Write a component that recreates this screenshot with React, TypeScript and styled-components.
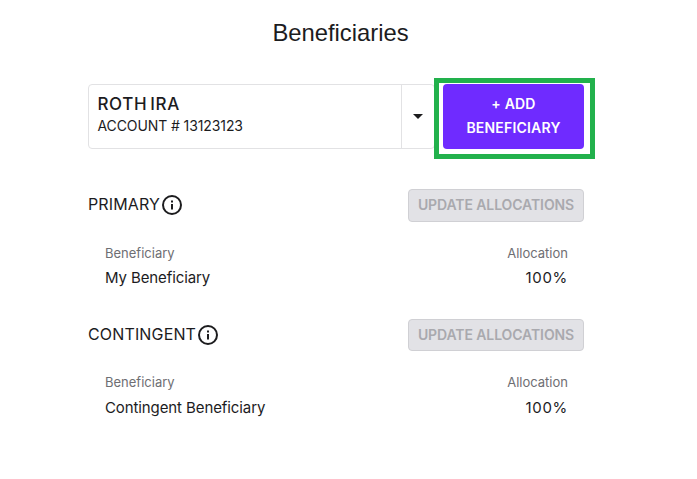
import React from "react";
import styled, { createGlobalStyle } from "styled-components";

const GlobalStyle = createGlobalStyle`
    html, body {
        margin: 0;
        background: #fff;
        font-family: Inter, "Liberation Sans", sans-serif;
        color: #1c1c1e;
    }
`;

const Page = styled.main`
    width: 697px;
    height: 479px;
    overflow: hidden;
    padding: 0 113px 0 88px;
    box-sizing: border-box;
    display: flex;
    flex-direction: column;
`;

const Title = styled.h1`
    margin: 17px 0 36px;
    padding-left: 9px;
    height: 31px;
    line-height: 31px;
    font-size: 23.8px;
    font-weight: 400;
    text-align: center;
    font-family: "Liberation Sans", sans-serif;
`;

const TopRow = styled.div`
    display: flex;
    height: 65px;
    gap: 8px;
    margin-bottom: 40px;
`;

const AccountSelect = styled.div`
    flex: 1;
    display: flex;
    border: 1px solid #e2e2e4;
    border-radius: 4px;
    box-sizing: border-box;
`;

const AccountText = styled.div`
    flex: 1;
    padding: 8px 9px 0 8.5px;
`;

const AccountName = styled.div`
    font-size: 17px;
    line-height: 22px;
    font-weight: 500;
    letter-spacing: 0.6px;
    word-spacing: -2px;
`;

const AccountNumber = styled.div`
    font-size: 14px;
    line-height: 22px;
    letter-spacing: -0.1px;
`;

const Caret = styled.div`
    width: 32px;
    border-left: 1px solid #e2e2e4;
    display: flex;
    align-items: center;
    justify-content: center;

    &::after {
        content: "";
        border-left: 5px solid transparent;
        border-right: 5px solid transparent;
        border-top: 5px solid #1c1c1e;
    }
`;

const AddButton = styled.button`
    position: relative;
    width: 141px;
    border: 0;
    border-radius: 4px;
    background: #6f2bff;
    color: #fff;
    font: 600 14px/24px Inter, "Liberation Sans", sans-serif;
    letter-spacing: 0.2px;
    padding: 0 0 2px;

    /* annotation box drawn over the button */
    &::after {
        content: "";
        position: absolute;
        top: -6px;
        left: -9px;
        right: -11px;
        bottom: -10px;
        border: 5px solid #22b14c;
        pointer-events: none;
    }
`;

const Section = styled.section`
    margin-bottom: 28.5px;
`;

const SectionHeader = styled.div`
    display: flex;
    align-items: center;
    justify-content: space-between;
    height: 32.5px;
    margin-bottom: 21px;
`;

const SectionLabel = styled.div`
    display: flex;
    align-items: center;
    gap: 2px;
    font-size: 16px;
    letter-spacing: 0.15px;
`;

const LabelText = styled.span`
    padding-bottom: 2px;
`;

const UpdateButton = styled.button`
    width: 176px;
    height: 32.5px;
    border: 1px solid #d0d0d4;
    border-radius: 4px;
    background: #e2e2e6;
    color: #a9a9ae;
    font: 600 14px Inter, "Liberation Sans", sans-serif;
    letter-spacing: -0.1px;
    padding: 0 0 1px;
`;

const Row = styled.div`
    display: flex;
    justify-content: space-between;
    padding: 0 16px 0 17px;
`;

const HeadRow = styled(Row)`
    font-size: 13px;
    line-height: 20px;
    color: #6e6e73;
    margin-bottom: 3.5px;
`;

const ValueRow = styled(Row)`
    font-size: 15px;
    line-height: 24px;
    letter-spacing: -0.1px;
`;

const Amount = styled.span`
    letter-spacing: 0.7px;
`;

function InfoIcon() {
    return (
        <svg width="20" height="20" viewBox="0 0 20 20" fill="none" aria-hidden="true">
            <circle cx="10" cy="10" r="9" stroke="#1c1c1e" strokeWidth="2" />
            <rect x="9" y="9" width="2" height="5.5" fill="#1c1c1e" />
            <rect x="9" y="5.5" width="2" height="2" fill="#1c1c1e" />
        </svg>
    );
}

const sections = [
    { label: "PRIMARY", name: "My Beneficiary" },
    { label: "CONTINGENT", name: "Contingent Beneficiary" },
];

export default function App() {
    return (
        <Page>
            <GlobalStyle />
            <Title>Beneficiaries</Title>
            <TopRow>
                <AccountSelect>
                    <AccountText>
                        <AccountName>ROTH IRA</AccountName>
                        <AccountNumber>ACCOUNT # 13123123</AccountNumber>
                    </AccountText>
                    <Caret />
                </AccountSelect>
                <AddButton>
                    + ADD
                    <br />
                    BENEFICIARY
                </AddButton>
            </TopRow>
            {sections.map(section => (
                <Section key={section.label}>
                    <SectionHeader>
                        <SectionLabel>
                            <LabelText>{section.label}</LabelText>
                            <InfoIcon />
                        </SectionLabel>
                        <UpdateButton disabled>UPDATE ALLOCATIONS</UpdateButton>
                    </SectionHeader>
                    <HeadRow>
                        <span>Beneficiary</span>
                        <span>Allocation</span>
                    </HeadRow>
                    <ValueRow>
                        <span>{section.name}</span>
                        <Amount>100%</Amount>
                    </ValueRow>
                </Section>
            ))}
        </Page>
    );
}
